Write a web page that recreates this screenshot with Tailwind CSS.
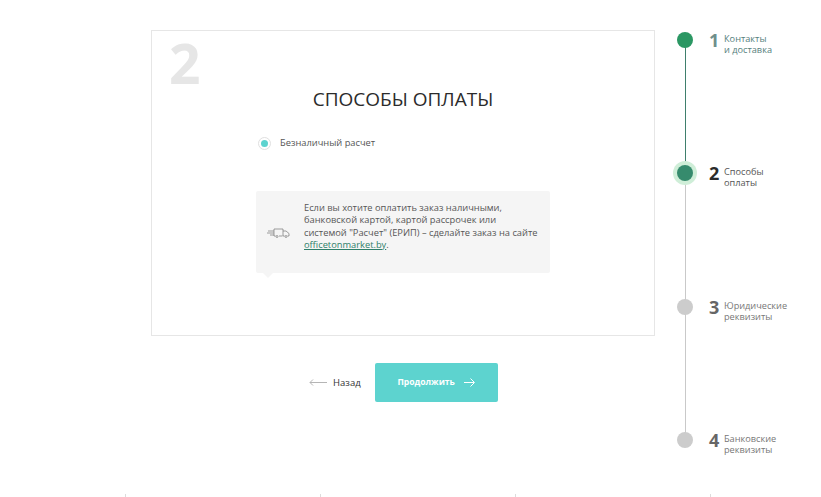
<!DOCTYPE html>
<html lang="ru">
<head>
  <meta charset="UTF-8">
  <title>Способы оплаты</title>
  <script src="https://cdn.jsdelivr.net/npm/@tailwindcss/browser@4"></script>
</head>
<body class="bg-white overflow-hidden font-['Open_Sans',sans-serif]">
<div class="relative w-[821px] h-[497px] overflow-hidden">
  <div class="flex pl-[151px] pt-[30px]">
    <!-- left column -->
    <div class="w-[504px]">
      <div class="relative h-[306px] border border-[#e6e6e6] bg-white">
        <div class="absolute left-[17px] top-[-3px] text-[55px] leading-[70px] font-bold text-[#e6e6e6]">2</div>
        <h1 class="pt-[55px] text-center text-[19px] leading-[26px] text-[#2b2b2b]">СПОСОБЫ ОПЛАТЫ</h1>
        <div class="flex items-center ml-[106px] mt-[24px]">
          <span class="flex items-center justify-center w-[13px] h-[13px] rounded-full border border-[#e0e0e0]">
            <span class="w-[7px] h-[7px] rounded-full bg-[#5dd3cf]"></span>
          </span>
          <span class="ml-[9px] text-[9.3px] leading-[14px] text-[#555]">Безналичный расчет</span>
        </div>
        <div class="relative flex items-center ml-[104px] mt-[41px] w-[294px] h-[82px] rounded-[2px] bg-[#f5f5f5]">
          <svg class="ml-[11px] mt-[1px] shrink-0" width="24" height="10" viewBox="0 0 24 10" fill="none" stroke="#777" stroke-width="0.7">
            <path d="M1 3h6M0 5h7M3 7h4M7 8V1h9v7M7 8h1.5M12 8h3.5M16 3h3l3 2.5V8h-1.5M16 8h1.5"/>
            <circle cx="10" cy="8.5" r="1"/>
            <circle cx="19" cy="8.5" r="1"/>
          </svg>
          <p class="ml-[13px] mb-[11px] whitespace-nowrap text-[9.3px] leading-[12.5px] text-[#555]">Если вы хотите оплатить заказ наличными,<br>банковской картой, картой рассрочек или<br>системой "Расчет" (ЕРИП) – сделайте заказ на сайте<br><a class="underline text-[#2f7f6a]" href="#">officetonmarket.by</a>.</p>
          <span class="absolute left-[7px] top-[82px] w-0 h-0 border-x-[5px] border-x-transparent border-t-[5px] border-t-[#f5f5f5]"></span>
        </div>
      </div>
      <div class="flex items-center mt-[27px] ml-[158px]">
        <svg width="18" height="7" viewBox="0 0 18 7" fill="none" stroke="#b5b5b5" stroke-width="1"><path d="M18 3.5H1M4 .5l-3 3 3 3"/></svg>
        <span class="ml-[6px] text-[9.5px] leading-[14px] text-[#333]">Назад</span>
        <button class="flex items-center justify-center ml-[14px] w-[123px] h-[39px] rounded-[2px] bg-[#5dd3cf] text-white text-[8.6px] font-bold">
          Продолжить
          <svg class="ml-[9px]" width="11" height="9" viewBox="0 0 11 9" fill="none" stroke="#fff" stroke-width="1"><path d="M0 4.5h10M6.5 .5l4 4-4 4"/></svg>
        </button>
      </div>
    </div>
    <!-- stepper -->
    <div class="relative ml-[22px] mt-[2px] w-[130px]">
      <div class="absolute left-[7.5px] top-[8px] w-[1px] h-[133px] bg-[#3f7f6c]"></div>
      <div class="absolute left-[7.5px] top-[141px] w-[1px] h-[267px] bg-[#c9c9c9]"></div>
      <div class="relative flex h-[133.4px]">
        <span class="w-[16px] h-[16px] rounded-full bg-[#2b9763] shrink-0"></span>
        <span class="ml-[16px] w-[12px] text-[18px] leading-[16px] font-bold text-[#6f8f8c]">1</span>
        <span class="ml-[3px] mt-[1px] text-[9.2px] leading-[11px] text-[#55807c]">Контакты<br>и доставка</span>
      </div>
      <div class="relative flex h-[133.4px]">
        <span class="w-[16px] h-[16px] rounded-full bg-[#368b6d] shrink-0 ring-[4px] ring-[#cfeed8]"></span>
        <span class="ml-[16px] w-[12px] text-[18px] leading-[16px] font-bold text-[#2b2b2b]">2</span>
        <span class="ml-[3px] mt-[1px] text-[9.2px] leading-[11px] text-[#555]">Способы<br>оплаты</span>
      </div>
      <div class="relative flex h-[133.4px]">
        <span class="w-[16px] h-[16px] rounded-full bg-[#cccccc] shrink-0"></span>
        <span class="ml-[16px] w-[12px] text-[18px] leading-[16px] font-bold text-[#666]">3</span>
        <span class="ml-[3px] mt-[1px] text-[9.2px] leading-[11px] text-[#777]">Юридические<br>реквизиты</span>
      </div>
      <div class="relative flex">
        <span class="w-[16px] h-[16px] rounded-full bg-[#cccccc] shrink-0"></span>
        <span class="ml-[16px] w-[12px] text-[18px] leading-[16px] font-bold text-[#666]">4</span>
        <span class="ml-[3px] mt-[1px] text-[9.2px] leading-[11px] text-[#777]">Банковские<br>реквизиты</span>
      </div>
    </div>
  </div>
  <!-- small ticks at the bottom edge -->
  <div class="absolute left-[125px] top-[494px] flex gap-[194px]">
    <span class="w-px h-[3px] bg-[#dcdcdc]"></span>
    <span class="w-px h-[3px] bg-[#dcdcdc]"></span>
    <span class="w-px h-[3px] bg-[#dcdcdc]"></span>
    <span class="w-px h-[3px] bg-[#dcdcdc]"></span>
  </div>
</div>
</body>
</html>
